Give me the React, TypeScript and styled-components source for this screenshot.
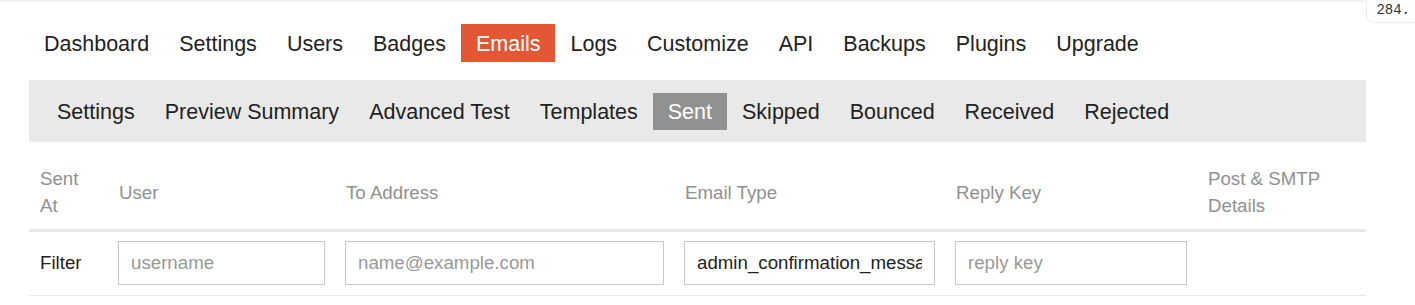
import React from 'react'
import styled, { createGlobalStyle } from 'styled-components'

const GlobalStyle = createGlobalStyle`
  body {
    margin: 0;
    background: #fff;
    font-family: "Liberation Sans", Arial, sans-serif;
    color: #222;
  }
`

const Page = styled.div`
  position: relative;
  width: 1415px;
  min-height: 305px;
`

const TopShade = styled.div`
  height: 3px;
  background: linear-gradient(#ececec, #fff);
`

const Counter = styled.div`
  position: absolute;
  top: 0;
  right: -4px;
  padding: 3px 8px 4px 9px;
  background: #fff;
  border: 1px solid #eee;
  border-top: none;
  border-radius: 0 0 0 8px;
  font-family: "Liberation Mono", "DejaVu Sans Mono", monospace;
  font-size: 14px;
  line-height: 15px;
  color: #333;
`

const Content = styled.div`
  margin: 0 49px 0 29px;
`

const NavList = styled.ul`
  display: flex;
  list-style: none;
  margin: 21px 0 0;
  padding: 0;
`

const NavItem = styled.li<{ $active?: boolean }>`
  padding: 7px 15px 5px;
  font-size: 21.5px;
  line-height: 26px;
  height: 26px;
  color: ${({ $active }) => ($active ? '#fff' : '#222')};
  background: ${({ $active }) => ($active ? '#e45735' : 'transparent')};
`

const SubNav = styled.ul`
  display: flex;
  list-style: none;
  margin: 18px 0 0;
  padding: 13px 13px 12px;
  background: #e9e9e9;
`

const SubItem = styled.li<{ $active?: boolean }>`
  padding: 7px 15px 5px;
  font-size: 21.5px;
  line-height: 25px;
  height: 25px;
  color: ${({ $active }) => ($active ? '#fff' : '#222')};
  background: ${({ $active }) => ($active ? '#919191' : 'transparent')};
`

const Table = styled.table`
  width: 100%;
  margin-top: 11px;
  border-collapse: collapse;
  table-layout: fixed;
  font-size: 18.7px;
`

const HeadCell = styled.th`
  padding: 12px 10px 10px 11px;
  text-align: left;
  font-weight: normal;
  color: #919191;
  line-height: 27px;
  vertical-align: middle;
  border-bottom: 3px solid #e9e9e9;
`

const Cell = styled.td`
  padding: 9px 10px 10px;
  vertical-align: middle;
  border-bottom: 1px solid #e9e9e9;
`

const FilterLabel = styled(Cell)`
  padding-left: 11px;
  color: #222;
`

const FilterInput = styled.input`
  box-sizing: border-box;
  display: block;
  width: 100%;
  height: 44px;
  margin: 0;
  padding: 0 12px;
  border: 1px solid #c8c8c8;
  border-radius: 0;
  font-family: inherit;
  font-size: 18.7px;
  color: #222;
  background: #fff;

  &::placeholder {
    color: #999;
  }
`

const mainNav = ['Dashboard', 'Settings', 'Users', 'Badges', 'Emails', 'Logs', 'Customize', 'API', 'Backups', 'Plugins', 'Upgrade']
const emailNav = ['Settings', 'Preview Summary', 'Advanced Test', 'Templates', 'Sent', 'Skipped', 'Bounced', 'Received', 'Rejected']

const columns = [
  { label: 'Sent At', width: 79 },
  { label: 'User', width: 227 },
  { label: 'To Address', width: 339 },
  { label: 'Email Type', width: 271 },
  { label: 'Reply Key', width: 252 },
  { label: 'Post & SMTP Details', width: 169 },
]

export default function App() {
  return (
    <Page>
      <GlobalStyle />
      <TopShade />
      <Counter>284.</Counter>
      <Content>
        <NavList>
          {mainNav.map(item => (
            <NavItem key={item} $active={item === 'Emails'}>
              {item}
            </NavItem>
          ))}
        </NavList>
        <SubNav>
          {emailNav.map(item => (
            <SubItem key={item} $active={item === 'Sent'}>
              {item}
            </SubItem>
          ))}
        </SubNav>
        <Table>
          <colgroup>
            {columns.map(c => (
              <col key={c.label} style={{ width: c.width }} />
            ))}
          </colgroup>
          <thead>
            <tr>
              {columns.map(c => (
                <HeadCell key={c.label}>{c.label}</HeadCell>
              ))}
            </tr>
          </thead>
          <tbody>
            <tr>
              <FilterLabel>Filter</FilterLabel>
              <Cell>
                <FilterInput placeholder="username" />
              </Cell>
              <Cell>
                <FilterInput placeholder="name@example.com" />
              </Cell>
              <Cell>
                <FilterInput defaultValue="admin_confirmation_message" />
              </Cell>
              <Cell>
                <FilterInput placeholder="reply key" />
              </Cell>
              <Cell />
            </tr>
          </tbody>
        </Table>
      </Content>
    </Page>
  )
}
